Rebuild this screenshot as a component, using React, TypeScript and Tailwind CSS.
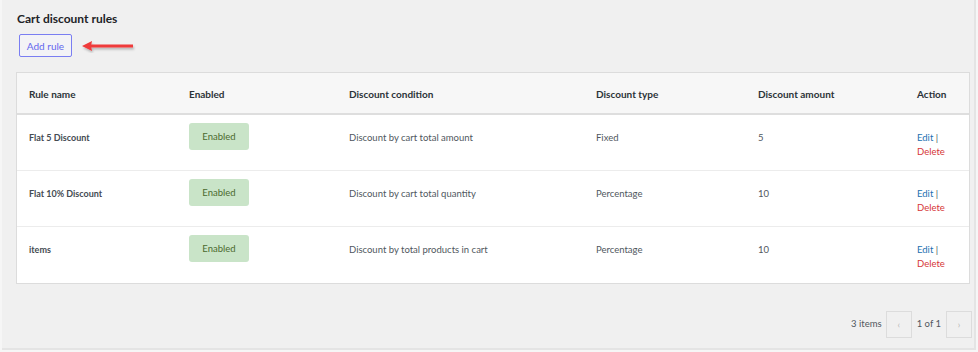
import React from "react";

const rules = [
  { name: "Flat 5 Discount", condition: "Discount by cart total amount", type: "Fixed", amount: "5" },
  { name: "Flat 10% Discount", condition: "Discount by cart total quantity", type: "Percentage", amount: "10" },
  { name: "items", condition: "Discount by total products in cart", type: "Percentage", amount: "10" },
];

const cols = ["w-[160px]", "w-[160px]", "w-[247px]", "w-[162px]", "w-[159px]", "flex-1"];
const headers = ["Rule name", "Enabled", "Discount condition", "Discount type", "Discount amount", "Action"];

function Arrow() {
  return (
    <svg width="56" height="14" viewBox="0 0 56 14" className="ml-[9px]">
      <defs>
        <filter id="sh" x="-10%" y="-50%" width="130%" height="220%">
          <feDropShadow dx="1" dy="2" stdDeviation="1" floodColor="#000" floodOpacity="0.25" />
        </filter>
      </defs>
      <g filter="url(#sh)">
        <path d="M9 5.6 H52 V8.4 H9 Z" fill="#ef3b3b" />
        <path d="M1 7 L11 2 L10 7 L11 12 Z" fill="#ef3b3b" />
      </g>
    </svg>
  );
}

export default function App() {
  return (
    <div
      className="w-[978px] h-[352px] bg-[#f6f6f6] overflow-hidden"
      style={{ fontFamily: 'Lato, "Open Sans", sans-serif' }}
    >
      <div className="ml-[2px] w-[974px] h-[350px] bg-[#f0f0f0] border-r-[2px] border-b-[2px] border-[#e4e4e4] pt-[11px] pl-[14px] pr-[4px]">
        <h1 className="text-[12px] font-bold text-[#1d2327] leading-[16px] ml-[1px]">Cart discount rules</h1>
        <div className="flex items-center mt-[7px] ml-[3px]">
          <button className="h-[23px] w-[53px] border border-[#7a7ef2] rounded-[2px] bg-[#f3f3f6] text-[10px] text-[#6367ee] leading-none">
            Add rule
          </button>
          <Arrow />
        </div>

        <div className="mt-[15px] w-[954px] border border-[#dcdcdc] bg-white">
          <div className="flex h-[42px] items-center pt-[3px] bg-[#f7f7f7] border-b-2 border-[#dedede]">
            {headers.map((h, i) => (
              <div key={h} className={`${cols[i]} pl-[12px] text-[10px] font-bold text-[#2c3338]`}>
                {h}
              </div>
            ))}
          </div>
          {rules.map((r, idx) => (
            <div
              key={r.name}
              className={`flex h-[56px] pt-[15px] text-[9.5px] leading-[14px] text-[#50575e] ${idx < 2 ? "border-b border-[#ececec]" : ""}`}
            >
              <div className={`${cols[0]} pl-[12px] font-bold text-[9px] text-[#444b52] pt-[1px]`}>{r.name}</div>
              <div className={`${cols[1]} pl-[12px] -mt-[7px]`}>
                <span className="inline-flex items-center justify-center w-[60px] h-[27px] rounded-[3px] bg-[#c9e4c8] text-[#4b6a2e]">
                  Enabled
                </span>
              </div>
              <div className={`${cols[2]} pl-[12px] pt-[1px]`}>{r.condition}</div>
              <div className={`${cols[3]} pl-[12px] pt-[1px]`}>{r.type}</div>
              <div className={`${cols[4]} pl-[12px] pt-[1px]`}>{r.amount}</div>
              <div className={`${cols[5]} pl-[12px] pt-[1px]`}>
                <span className="text-[#2271b1]">Edit</span> |
                <br />
                <span className="text-[#d63638]">Delete</span>
              </div>
            </div>
          ))}
        </div>

        <div className="flex justify-end items-center mt-[27px] w-[956px] text-[9.5px] text-[#50575e]">
          <span className="mr-[4px]">3 items</span>
          <span className="w-[26px] h-[27px] border border-[#dcdcdc] flex items-center justify-center text-[#b5b5b5] text-[9px]">‹</span>
          <span className="mx-[5px]">1 of 1</span>
          <span className="w-[26px] h-[27px] border border-[#dcdcdc] flex items-center justify-center text-[#b5b5b5] text-[9px]">›</span>
        </div>
      </div>
    </div>
  );
}
